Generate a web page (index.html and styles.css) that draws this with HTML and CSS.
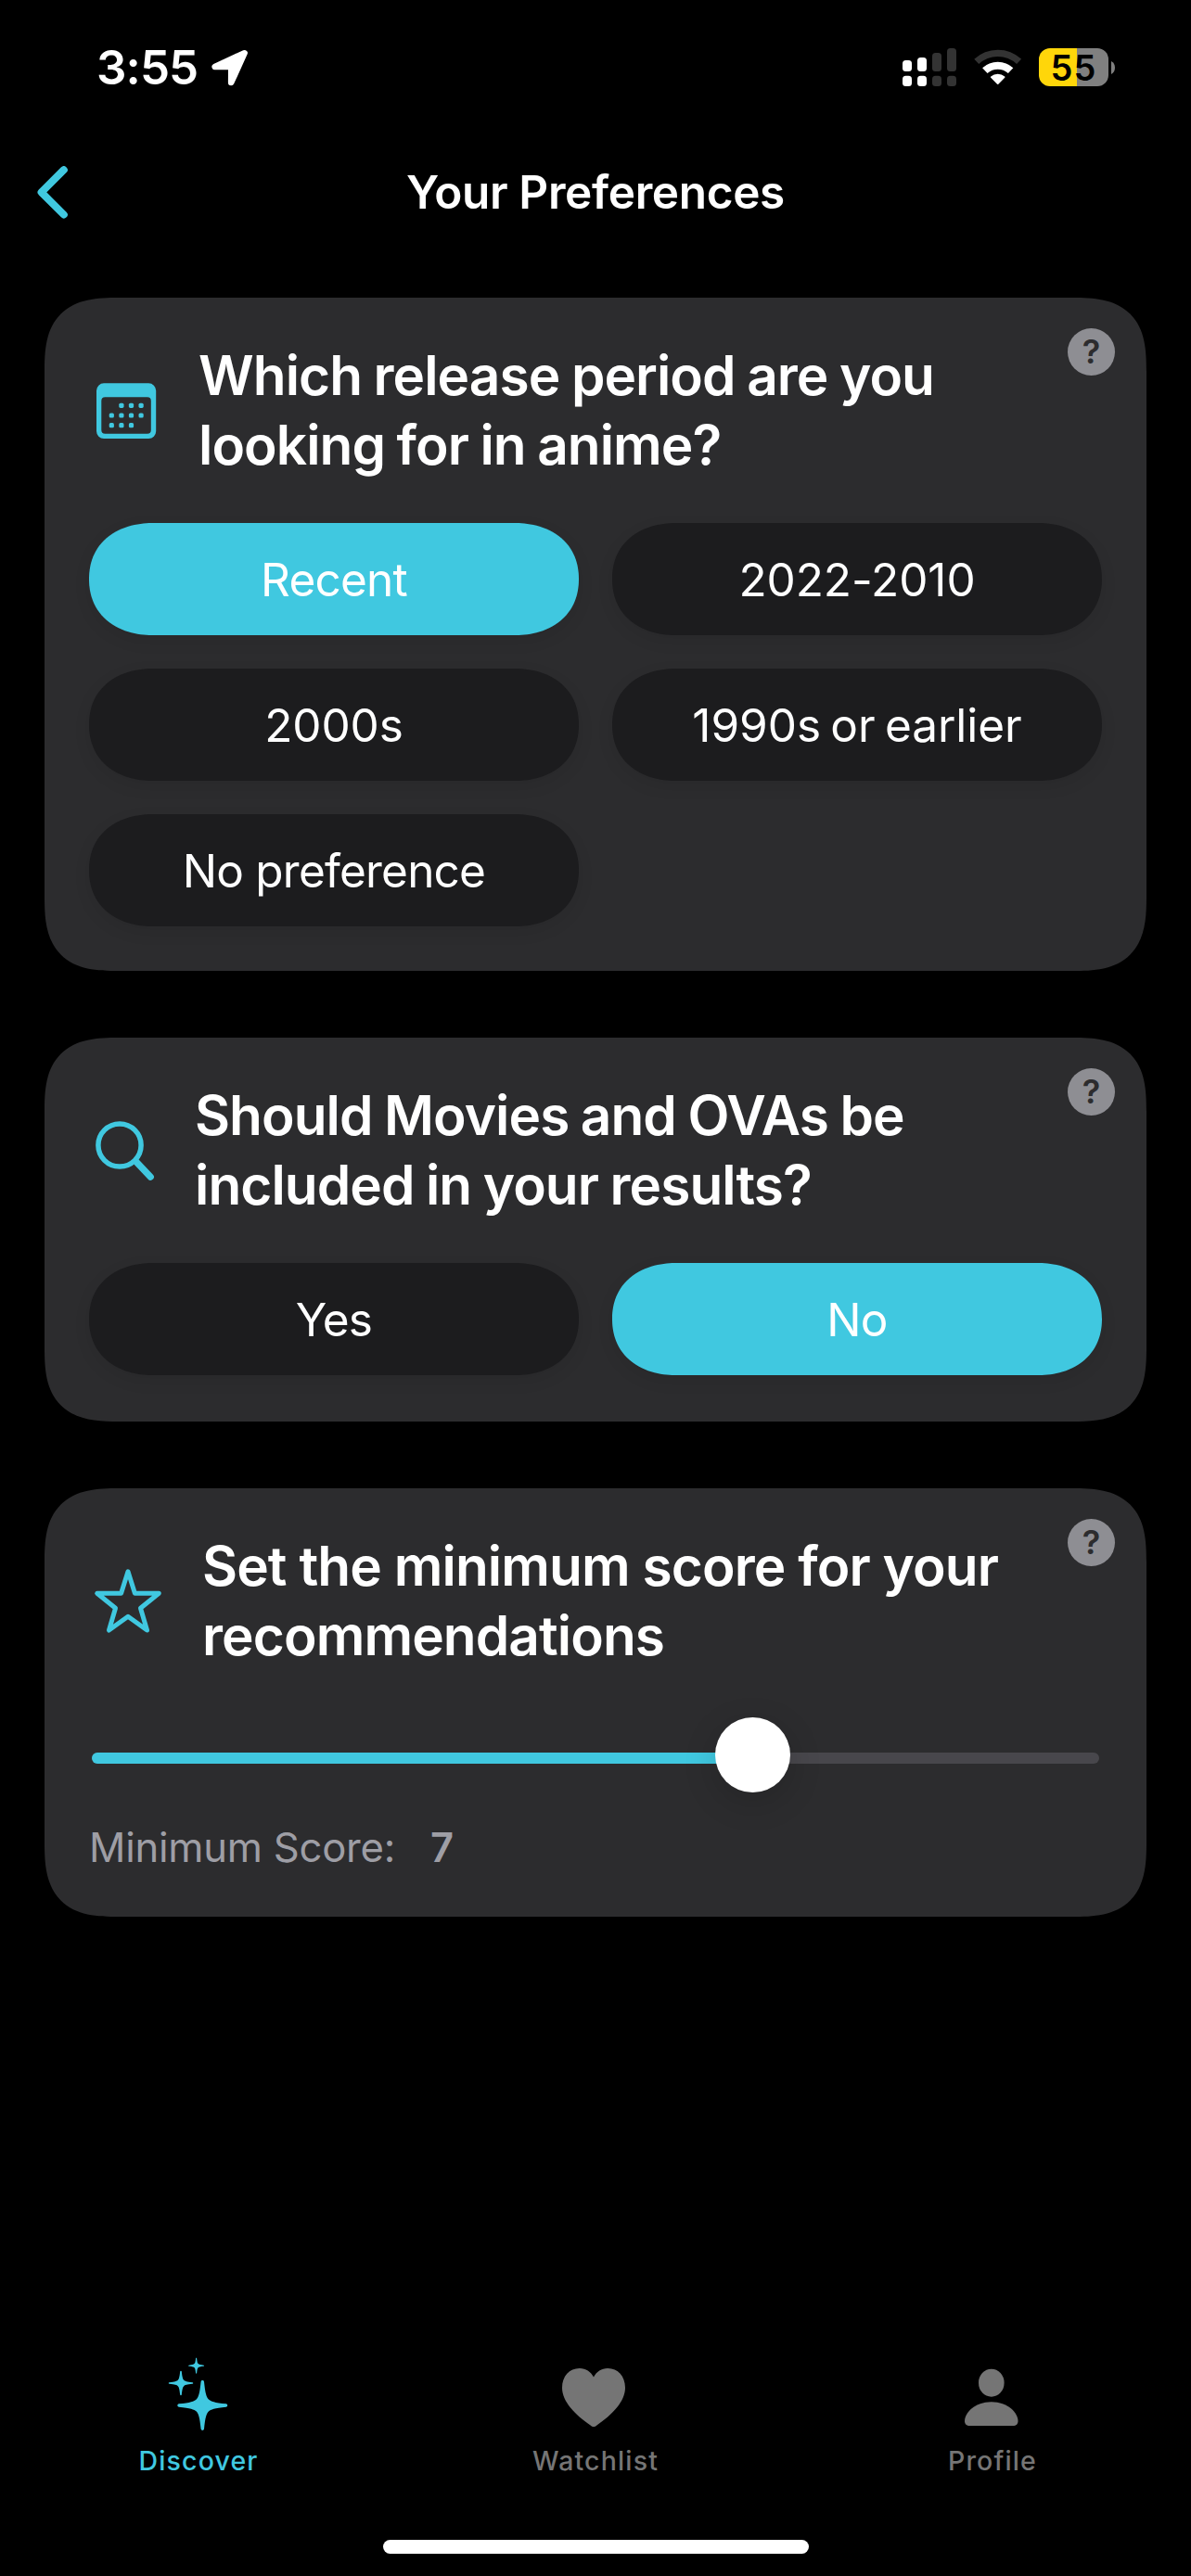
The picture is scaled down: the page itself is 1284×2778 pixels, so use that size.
FILE: index.html
```html
<!DOCTYPE html>
<html lang="en">
<head>
<meta charset="utf-8">
<title>Your Preferences</title>
<link rel="stylesheet" href="styles.css">
</head>
<body>
<div class="screen">
  <header class="status">
    <div class="status-left">
      <span class="time">3:55</span>
      <svg class="location" viewBox="0 0 45 45" width="45" height="45"><path d="M38.6 7.2 6.7 22h17.6l-.1 17z"/></svg>
    </div>
    <div class="status-right">
      <svg viewBox="0 0 58 41" width="58" height="41">
        <g fill="#fff">
          <rect x="0" y="13" width="10" height="12" rx="3.5"/><rect x="16" y="10" width="10" height="15" rx="3.5"/>
          <rect x="0" y="29.7" width="10" height="11.3" rx="3.5"/><rect x="16" y="29.7" width="10" height="11.3" rx="3.5"/>
        </g>
        <g fill="#333">
          <rect x="32" y="5" width="10" height="20" rx="3.5"/><rect x="48" y="0" width="10" height="25" rx="3.5"/>
          <rect x="32" y="29.7" width="10" height="11.3" rx="3.5"/><rect x="48" y="29.7" width="10" height="11.3" rx="3.5"/>
        </g>
      </svg>
      <svg viewBox="0 0 51 41" width="51" height="41" fill="none">
        <path d="M2.8 14.4a33.6 33.6 0 0 1 45.8 0" stroke="#333" stroke-width="7.4"/>
        <path d="M11.8 24.1a20.4 20.4 0 0 1 27.8 0" stroke="#fff" stroke-width="8"/>
        <path d="M25.7 38 18.8 31.2a10.4 10.4 0 0 1 13.8 0z" fill="#fff" stroke="#fff" stroke-width="1.8" stroke-linejoin="round"/>
      </svg>
      <div class="battery-group">
        <span class="battery">55</span>
        <svg viewBox="0 0 4 14" width="4" height="14"><path d="M0 0c2.6 1.2 4 3.7 4 7s-1.4 5.8-4 7z" fill="#808080"/></svg>
      </div>
    </div>
  </header>

  <nav class="navbar">
    <svg class="back" viewBox="0 0 33 57" width="33" height="57"><path d="M28.8 4.2 4.6 28.3l24.2 24.2"/></svg>
    <h1>Your Preferences</h1>
  </nav>

  <main>
    <section class="card">
      <span class="help">?</span>
      <div class="question">
        <svg viewBox="0 0 78 64" width="78" height="64" fill="#40c8e0">
          <path fill-rule="evenodd" d="M16 3.3h48.2a8 8 0 0 1 8 8V55a8 8 0 0 1-8 8H16a8 8 0 0 1-8-8V11.3a8 8 0 0 1 8-8zM17.3 18.3a4 4 0 0 0-4 4v31.4a4 4 0 0 0 4 4h45.500a4 4 0 0 0 4-4V22.3a4 4 0 0 0-4-4z"/>
          <rect x="32.3" y="24.7" width="5.2" height="5.2" rx="1.6"/><rect x="42.9" y="24.7" width="5.2" height="5.2" rx="1.6"/><rect x="53.5" y="24.7" width="5.2" height="5.2" rx="1.6"/>
          <rect x="21.7" y="35.4" width="5.2" height="5.2" rx="1.6"/><rect x="32.3" y="35.4" width="5.2" height="5.2" rx="1.6"/><rect x="42.9" y="35.4" width="5.2" height="5.2" rx="1.6"/><rect x="53.5" y="35.4" width="5.2" height="5.2" rx="1.6"/>
          <rect x="21.7" y="46.1" width="5.2" height="5.2" rx="1.6"/><rect x="32.3" y="46.1" width="5.2" height="5.2" rx="1.6"/><rect x="42.9" y="46.1" width="5.2" height="5.2" rx="1.6"/>
        </svg>
        <h2>Which release period are you<br>looking for in anime?</h2>
      </div>
      <div class="options">
        <button class="option selected">Recent</button>
        <button class="option years">2022-2010</button>
        <button class="option years">2000s</button>
        <button class="option years">1990s or earlier</button>
        <button class="option">No preference</button>
      </div>
    </section>

    <section class="card">
      <span class="help">?</span>
      <div class="question">
        <svg viewBox="0 0 74 66" width="74" height="66" fill="none" stroke="#40c8e0" stroke-linecap="round">
          <circle cx="33" cy="28" r="23.1" stroke-width="5.5"/>
          <path d="M50.5 45.5 66.3 62.2" stroke-width="7.2"/>
        </svg>
        <h2>Should Movies and OVAs be<br>included in your results?</h2>
      </div>
      <div class="options last">
        <button class="option">Yes</button>
        <button class="option selected">No</button>
      </div>
    </section>

    <section class="card">
      <span class="help">?</span>
      <div class="question">
        <svg viewBox="0 0 82 72" width="82" height="72" fill="none" stroke="#40c8e0" stroke-width="5" stroke-linejoin="round">
          <path d="M42 4.8 49.4 28.3H75.3L55.5 44.3 62.5 68 42 53.3 21.5 68 28.5 44.3 8.7 28.3H34.6z"/>
        </svg>
        <h2 class="wide">Set the minimum score for your<br>recommendations</h2>
      </div>
      <div class="slider">
        <div class="track"><div class="fill" style="width: 65.6%"></div></div>
        <div class="thumb" style="left: 65.6%"></div>
      </div>
      <p class="score"><span>Minimum Score:</span><b>7</b></p>
    </section>
  </main>

  <footer>
    <div class="tabs">
      <div class="tab active">
        <svg viewBox="0 0 80 80" width="80" height="80">
          <defs><path id="spark" d="M1.7-25.6C3-13 4.2-9 6.6-6.6 9-4.2 13-3 25.6-1.7 27.5-1.3 27.5 1.3 25.6 1.7 13 3 9 4.2 6.6 6.6 4.2 9 3 13 1.7 25.6 1.3 27.5-1.3 27.5-1.7 25.6-3 13-4.2 9-6.6 6.6-9 4.2-13 3-25.6 1.7-27.5 1.3-27.5-1.3-25.6-1.7-13-3-9-4.2-6.6-6.6-4.2-9-3-13-1.7-25.6-1.3-27.5 1.3-27.5 1.7-25.6z"/></defs>
          <use href="#spark" transform="translate(44.3 52)"/>
          <use href="#spark" transform="translate(21 28) scale(.49)"/>
          <use href="#spark" transform="translate(37.6 9.2) scale(.315)"/>
        </svg>
        <span>Discover</span>
      </div>
      <div class="tab">
        <svg viewBox="-4 -12 80 80" width="80" height="80"><path d="M34 63c-1.2 0-2.2-.7-3.4-1.6C14 50 0 36 0 21 0 8.5 8 0 18.8 0 25.5 0 31 3.6 34 9.6 37 3.6 42.5 0 49.2 0 60 0 68 8.5 68 21c0 15-14 29-30.6 40.4C36.2 62.3 35.2 63 34 63z"/></svg>
        <span>Watchlist</span>
      </div>
      <div class="tab">
        <svg viewBox="-10 -12 80 80" width="80" height="80"><ellipse cx="28.8" cy="15.7" rx="13.8" ry="15"/><path d="M5.5 62C2 62 0 60 0 57c0-9 11-20.7 28.8-20.7S57.5 48 57.5 57c0 3-2 5-5.5 5z"/></svg>
        <span>Profile</span>
      </div>
    </div>
    <div class="home-indicator"></div>
  </footer>
</div>
</body>
</html>
```
FILE: styles.css
```css
* {
  box-sizing: border-box;
  margin: 0;
}

body {
  background: #000;
  color: #fff;
  font-family: Inter, "Liberation Sans", sans-serif;
}

svg {
  display: block;
  flex: none;
}

.screen {
  display: flex;
  flex-direction: column;
  width: 1284px;
  height: 2778px;
  overflow: hidden;
}

/* Status bar */
.status {
  display: flex;
  justify-content: space-between;
  height: 147px;
  padding: 0 82px 0 104px;
}

.status-left {
  display: flex;
  padding-top: 43px;
}

.time {
  width: 121px;
  font-size: 51px;
  font-weight: 600;
  line-height: 60px;
  letter-spacing: -0.9px;
}

.location {
  margin-top: 7px;
  fill: #fff;
  stroke: #fff;
  stroke-width: 6.6px;
  stroke-linejoin: round;
}

.status-right {
  display: flex;
  gap: 19px;
  padding-top: 52px;
}

.battery-group {
  display: flex;
  align-items: center;
  gap: 3px;
  height: 41px;
}

.battery {
  width: 75px;
  height: 41px;
  border-radius: 12px;
  background: linear-gradient(90deg, #ffd60a 41px, #808080 41px);
  color: #000;
  font-size: 38px;
  font-weight: 600;
  line-height: 42px;
  letter-spacing: 1px;
  text-align: center;
}

/* Navigation bar */
.navbar {
  display: grid;
  grid-template-columns: 1fr auto 1fr;
  align-items: center;
  height: 120px;
  padding: 0 40px;
}

.back {
  fill: none;
  stroke: #40c8e0;
  stroke-width: 8px;
  stroke-linecap: round;
  stroke-linejoin: round;
}

.navbar h1 {
  font-size: 49.5px;
  font-weight: 600;
  line-height: 60px;
  letter-spacing: -0.35px;
}

/* Cards */
main {
  display: flex;
  flex-direction: column;
  gap: 72px;
  padding: 54px 48px 0;
}

.card {
  position: relative;
  padding: 46px 48px 48px;
  border-radius: 80px;
  corner-shape: superellipse(1.48);
  background: #2c2c2e;
}

.help {
  position: absolute;
  top: 33px;
  right: 34px;
  width: 51px;
  height: 51px;
  border-radius: 50%;
  background: #8e8e93;
  color: #2c2c2e;
  font-size: 36px;
  font-weight: 600;
  line-height: 51px;
  text-align: center;
}

.question {
  display: flex;
  align-items: center;
  gap: 40px;
}

.question h2 {
  font-size: 58.5px;
  font-weight: 600;
  line-height: 75px;
  letter-spacing: -0.93px;
  word-spacing: -1.3px;
  white-space: nowrap;
}

.question h2.wide {
  letter-spacing: -0.9px;
  word-spacing: 0;
}

.options {
  display: grid;
  grid-template-columns: 1fr 1fr;
  gap: 36px;
  margin-top: 47px;
}

.options.last {
  margin-bottom: 2px;
}

.option {
  height: 121px;
  padding: 0;
  border: 0;
  border-radius: 70px / 60.5px;
  corner-shape: superellipse(1.14);
  background: #1c1c1e;
  box-shadow: 0 6px 18px rgba(0, 0, 0, 0.08);
  color: #fff;
  font: 400 49.5px/122px Inter, "Liberation Sans", sans-serif;
  letter-spacing: -0.8px;
}

.option.years {
  letter-spacing: -0.05px;
  word-spacing: -3.5px;
}

.option.selected {
  background: #40c8e0;
}

/* Score slider */
.slider {
  position: relative;
  display: flex;
  align-items: center;
  height: 81px;
  margin: 51px 3px 0;
  padding-top: 7px;
}

.track {
  flex: 1;
  height: 12px;
  border-radius: 6px;
  background: #48474c;
}

.fill {
  height: 12px;
  border-radius: 6px 0 0 6px;
  background: #40c8e0;
}

.thumb {
  position: absolute;
  top: 0;
  width: 81px;
  height: 81px;
  margin-left: -40px;
  border-radius: 50%;
  background: #fff;
  box-shadow: 0 10px 36px rgba(0, 0, 0, 0.16);
}

.score {
  display: flex;
  gap: 38px;
  margin: 33px 0 -1px;
  color: #9e9ea5;
  font-size: 43.6px;
  line-height: 54px;
  letter-spacing: -0.24px;
}

.score b {
  font-weight: 600;
}

/* Tab bar */
footer {
  margin-top: auto;
  padding-bottom: 24px;
}

.tabs {
  display: grid;
  grid-template-columns: repeat(3, 1fr);
  height: 197px;
}

.tab {
  display: flex;
  flex-direction: column;
  align-items: center;
  gap: 14px;
  color: #757575;
  font-size: 28.5px;
  font-weight: 500;
  line-height: 36px;
  letter-spacing: 1.15px;
}

.tab svg {
  fill: currentColor;
}

.tab.active {
  color: #40c8e0;
}

.home-indicator {
  width: 459px;
  height: 15px;
  margin: 0 auto;
  border-radius: 8px;
  background: #fff;
}
```
